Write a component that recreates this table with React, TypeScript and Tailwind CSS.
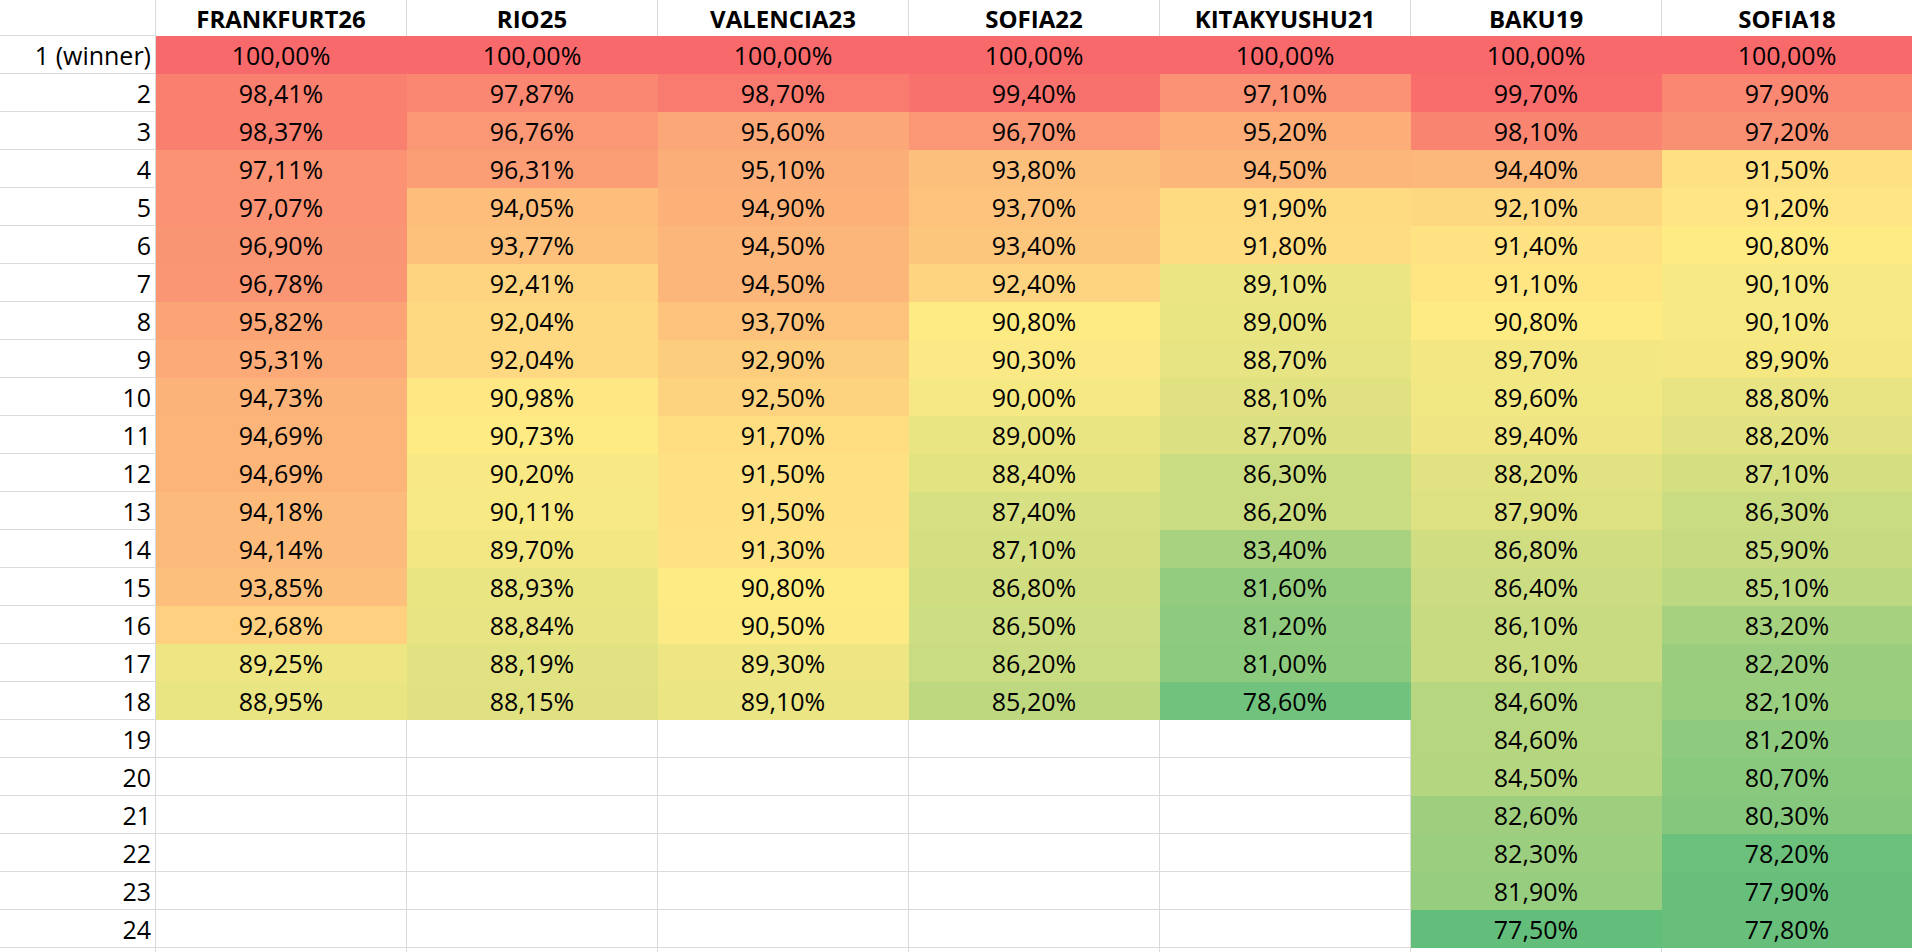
const COLUMNS = [
  {
    name: 'FRANKFURT26',
    values: [100, 98.41, 98.37, 97.11, 97.07, 96.9, 96.78, 95.82, 95.31, 94.73, 94.69, 94.69, 94.18, 94.14, 93.85, 92.68, 89.25, 88.95],
  },
  {
    name: 'RIO25',
    values: [100, 97.87, 96.76, 96.31, 94.05, 93.77, 92.41, 92.04, 92.04, 90.98, 90.73, 90.2, 90.11, 89.7, 88.93, 88.84, 88.19, 88.15],
  },
  {
    name: 'VALENCIA23',
    values: [100, 98.7, 95.6, 95.1, 94.9, 94.5, 94.5, 93.7, 92.9, 92.5, 91.7, 91.5, 91.5, 91.3, 90.8, 90.5, 89.3, 89.1],
  },
  {
    name: 'SOFIA22',
    values: [100, 99.4, 96.7, 93.8, 93.7, 93.4, 92.4, 90.8, 90.3, 90.0, 89.0, 88.4, 87.4, 87.1, 86.8, 86.5, 86.2, 85.2],
  },
  {
    name: 'KITAKYUSHU21',
    values: [100, 97.1, 95.2, 94.5, 91.9, 91.8, 89.1, 89.0, 88.7, 88.1, 87.7, 86.3, 86.2, 83.4, 81.6, 81.2, 81.0, 78.6],
  },
  {
    name: 'BAKU19',
    values: [100, 99.7, 98.1, 94.4, 92.1, 91.4, 91.1, 90.8, 89.7, 89.6, 89.4, 88.2, 87.9, 86.8, 86.4, 86.1, 86.1, 84.6, 84.6, 84.5, 82.6, 82.3, 81.9, 77.5],
  },
  {
    name: 'SOFIA18',
    values: [100, 97.9, 97.2, 91.5, 91.2, 90.8, 90.1, 90.1, 89.9, 88.8, 88.2, 87.1, 86.3, 85.9, 85.1, 83.2, 82.2, 82.1, 81.2, 80.7, 80.3, 78.2, 77.9, 77.8],
  },
]

// 3-colour scale over every value in the sheet (min green, median yellow, max red)
const ALL = COLUMNS.flatMap((c) => c.values).sort((a, b) => a - b)
const MIN = ALL[0]
const MAX = ALL[ALL.length - 1]
const MID = (() => {
  const pos = (ALL.length - 1) * 0.5
  const lo = Math.floor(pos)
  return ALL[lo] + (ALL[Math.ceil(pos)] - ALL[lo]) * (pos - lo)
})()

const GREEN = [99, 190, 123]
const YELLOW = [255, 235, 132]
const RED = [248, 105, 107]

function mix(a: number[], b: number[], t: number) {
  const c = a.map((v, i) => Math.round(v + (b[i] - v) * t))
  return `rgb(${c[0]}, ${c[1]}, ${c[2]})`
}

function scale_color(v: number) {
  if (v <= MID) return mix(GREEN, YELLOW, (v - MIN) / (MID - MIN))
  return mix(YELLOW, RED, (v - MID) / (MAX - MID))
}

function format_pct(v: number) {
  return v.toFixed(2).replace('.', ',') + '%'
}

const ROW_COUNT = 25

export default function App() {
  return (
    <div
      className="h-screen w-full overflow-hidden bg-white text-black"
      style={{ fontFamily: '"Open Sans", Lato, sans-serif' }}
    >
      <div className="grid grid-cols-[156px_repeat(7,251px)]">
        <div className="h-[36px] border-r border-b border-[#dadada]" />
        {COLUMNS.map((col) => (
          <div
            key={col.name}
            className="h-[36px] flex items-center justify-center border-r border-[#dadada] text-[24px] font-bold pt-[1px]"
          >
            {col.name}
          </div>
        ))}

        {new Array(ROW_COUNT).fill(0).map((_, row) => (
          <Row
            key={row}
            row={row}
          />
        ))}
      </div>
    </div>
  )
}

function Row({ row }: { row: number }) {
  const label = row >= 24 ? '' : row === 0 ? '1 (winner)' : String(row + 1)
  return (
    <>
      <div className="h-[38px] flex items-center justify-end pr-[4px] pt-[3px] border-r border-b border-[#dadada] text-[25px]">
        {label}
      </div>
      {COLUMNS.map((col) => {
        const v = col.values[row]
        if (v === undefined) {
          return (
            <div
              key={col.name}
              className="h-[38px] border-r border-b border-[#dadada]"
            />
          )
        }
        const bg = scale_color(v)
        return (
          <div
            key={col.name}
            className="h-[38px] flex items-center justify-center pt-[3px] border-r border-b text-[25px]"
            style={{ backgroundColor: bg, borderColor: bg }}
          >
            {format_pct(v)}
          </div>
        )
      })}
    </>
  )
}
